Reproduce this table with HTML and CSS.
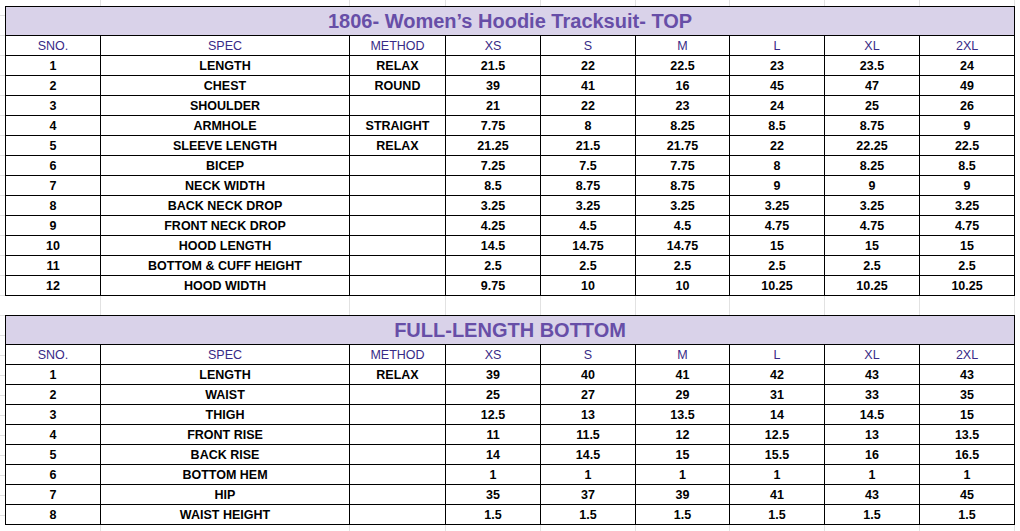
FILE: index.html
```html
<!DOCTYPE html>
<html>
<head>
<meta charset="utf-8">
<link rel="stylesheet" href="styles.css">
</head>
<body>
<main class="sheet">
  <table class="spec">
    <colgroup>
      <col class="c-sno"><col class="c-spec"><col class="c-method"><col class="c-xs"><col class="c-s"><col class="c-m"><col class="c-l"><col class="c-xl"><col class="c-2xl">
    </colgroup>
    <tr class="title-row"><td colspan="9">1806- Women’s Hoodie Tracksuit- TOP</td></tr>
    <tr class="head"><td>SNO.</td><td>SPEC</td><td>METHOD</td><td>XS</td><td>S</td><td>M</td><td>L</td><td>XL</td><td>2XL</td></tr>
    <tr><td>1</td><td>LENGTH</td><td>RELAX</td><td>21.5</td><td>22</td><td>22.5</td><td>23</td><td>23.5</td><td>24</td></tr>
    <tr><td>2</td><td>CHEST</td><td>ROUND</td><td>39</td><td>41</td><td>16</td><td>45</td><td>47</td><td>49</td></tr>
    <tr><td>3</td><td>SHOULDER</td><td></td><td>21</td><td>22</td><td>23</td><td>24</td><td>25</td><td>26</td></tr>
    <tr><td>4</td><td>ARMHOLE</td><td>STRAIGHT</td><td>7.75</td><td>8</td><td>8.25</td><td>8.5</td><td>8.75</td><td>9</td></tr>
    <tr><td>5</td><td>SLEEVE LENGTH</td><td>RELAX</td><td>21.25</td><td>21.5</td><td>21.75</td><td>22</td><td>22.25</td><td>22.5</td></tr>
    <tr><td>6</td><td>BICEP</td><td></td><td>7.25</td><td>7.5</td><td>7.75</td><td>8</td><td>8.25</td><td>8.5</td></tr>
    <tr><td>7</td><td>NECK WIDTH</td><td></td><td>8.5</td><td>8.75</td><td>8.75</td><td>9</td><td>9</td><td>9</td></tr>
    <tr><td>8</td><td>BACK NECK DROP</td><td></td><td>3.25</td><td>3.25</td><td>3.25</td><td>3.25</td><td>3.25</td><td>3.25</td></tr>
    <tr><td>9</td><td>FRONT NECK DROP</td><td></td><td>4.25</td><td>4.5</td><td>4.5</td><td>4.75</td><td>4.75</td><td>4.75</td></tr>
    <tr><td>10</td><td>HOOD LENGTH</td><td></td><td>14.5</td><td>14.75</td><td>14.75</td><td>15</td><td>15</td><td>15</td></tr>
    <tr><td>11</td><td>BOTTOM &amp; CUFF HEIGHT</td><td></td><td>2.5</td><td>2.5</td><td>2.5</td><td>2.5</td><td>2.5</td><td>2.5</td></tr>
    <tr><td>12</td><td>HOOD WIDTH</td><td></td><td>9.75</td><td>10</td><td>10</td><td>10.25</td><td>10.25</td><td>10.25</td></tr>
  </table>

  <table class="spec">
    <colgroup>
      <col class="c-sno"><col class="c-spec"><col class="c-method"><col class="c-xs"><col class="c-s"><col class="c-m"><col class="c-l"><col class="c-xl"><col class="c-2xl">
    </colgroup>
    <tr class="title-row"><td colspan="9">FULL-LENGTH BOTTOM</td></tr>
    <tr class="head"><td>SNO.</td><td>SPEC</td><td>METHOD</td><td>XS</td><td>S</td><td>M</td><td>L</td><td>XL</td><td>2XL</td></tr>
    <tr><td>1</td><td>LENGTH</td><td>RELAX</td><td>39</td><td>40</td><td>41</td><td>42</td><td>43</td><td>43</td></tr>
    <tr><td>2</td><td>WAIST</td><td></td><td>25</td><td>27</td><td>29</td><td>31</td><td>33</td><td>35</td></tr>
    <tr><td>3</td><td>THIGH</td><td></td><td>12.5</td><td>13</td><td>13.5</td><td>14</td><td>14.5</td><td>15</td></tr>
    <tr><td>4</td><td>FRONT RISE</td><td></td><td>11</td><td>11.5</td><td>12</td><td>12.5</td><td>13</td><td>13.5</td></tr>
    <tr><td>5</td><td>BACK RISE</td><td></td><td>14</td><td>14.5</td><td>15</td><td>15.5</td><td>16</td><td>16.5</td></tr>
    <tr><td>6</td><td>BOTTOM HEM</td><td></td><td>1</td><td>1</td><td>1</td><td>1</td><td>1</td><td>1</td></tr>
    <tr><td>7</td><td>HIP</td><td></td><td>35</td><td>37</td><td>39</td><td>41</td><td>43</td><td>45</td></tr>
    <tr><td>8</td><td>WAIST HEIGHT</td><td></td><td>1.5</td><td>1.5</td><td>1.5</td><td>1.5</td><td>1.5</td><td>1.5</td></tr>
  </table>
</main>
</body>
</html>
```

FILE: styles.css
```css
html, body {
  margin: 0;
  padding: 0;
}

body {
  width: 1020px;
  height: 531px;
  overflow: hidden;
  background-color: #ffffff;
  background-image:
    linear-gradient(#e2e2e2, #e2e2e2),
    linear-gradient(#e2e2e2, #e2e2e2),
    linear-gradient(#e2e2e2, #e2e2e2),
    linear-gradient(#e2e2e2, #e2e2e2),
    linear-gradient(#e2e2e2, #e2e2e2),
    linear-gradient(#e2e2e2, #e2e2e2),
    linear-gradient(#e2e2e2, #e2e2e2),
    linear-gradient(#e2e2e2, #e2e2e2),
    linear-gradient(#e2e2e2, #e2e2e2),
    repeating-linear-gradient(to bottom, transparent 0 15px, #e2e2e2 15px 16px, transparent 16px 20px);
  background-size:
    1px 100%, 1px 100%, 1px 100%, 1px 100%, 1px 100%,
    1px 100%, 1px 100%, 1px 100%, 1px 100%,
    5px 100%;
  background-position:
    100px 0, 349px 0, 445px 0, 540px 0, 635px 0,
    729px 0, 824px 0, 919px 0, 1014px 0,
    0 0;
  background-repeat: no-repeat;
  font-family: "Liberation Sans", Arial, sans-serif;
}

.sheet {
  display: flex;
  flex-direction: column;
  gap: 19px;
  padding: 6px 0 0 5px;
}

.spec {
  border-collapse: collapse;
  table-layout: fixed;
  width: 1010px;
  background: #ffffff;
}

.c-sno { width: 95px; }
.c-spec { width: 249px; }
.c-method { width: 96px; }
.c-xs { width: 95px; }
.c-s { width: 95px; }
.c-m { width: 94px; }
.c-l { width: 95px; }
.c-xl { width: 95px; }
.c-2xl { width: 95px; }

.spec td {
  border: 1px solid #000;
  padding: 0;
  height: 19px;
  text-align: center;
  vertical-align: middle;
  font-size: 12.5px;
  font-weight: bold;
  color: #000;
  line-height: 14px;
  white-space: nowrap;
  overflow: hidden;
}

.spec .title-row td {
  height: 28px;
  background: #d9d2e9;
  color: #674ea7;
  font-size: 20px;
  font-weight: bold;
  line-height: 22px;
}

.spec .head td {
  font-weight: normal;
  color: #382a86;
}
```
